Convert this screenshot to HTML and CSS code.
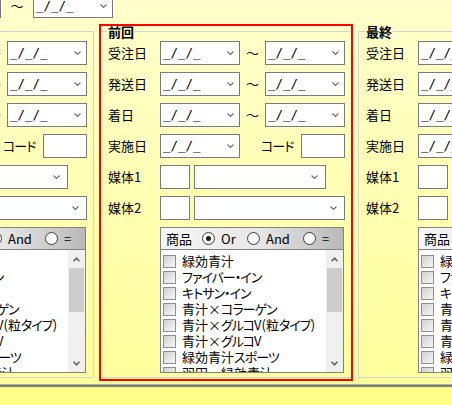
FILE: index.html
```html
<!DOCTYPE html>
<html lang="ja">
<head>
<meta charset="utf-8">
<title>検索条件</title>
<link rel="stylesheet" href="styles.css">
</head>
<body>
<div class="toprow">
  <div class="combo dt"><span class="val">_/_/_</span><svg class="dd" width="7" height="4" viewBox="0 0 7 4"><path d="M0.5 0.5L3.5 3.5L6.5 0.5"/></svg></div>
  <span class="tl top-tl">～</span>
  <div class="combo dt"><span class="val">_/_/_</span><svg class="dd" width="7" height="4" viewBox="0 0 7 4"><path d="M0.5 0.5L3.5 3.5L6.5 0.5"/></svg></div>
</div>

<div class="grps">
  <fieldset class="grp">
    <legend>今回</legend>
    <div class="row"><span class="lbl">受注日</span><div class="combo dt"><span class="val">_/_/_</span><svg class="dd" width="7" height="4" viewBox="0 0 7 4"><path d="M0.5 0.5L3.5 3.5L6.5 0.5"/></svg></div><span class="tl">～</span><div class="combo dt"><span class="val">_/_/_</span><svg class="dd" width="7" height="4" viewBox="0 0 7 4"><path d="M0.5 0.5L3.5 3.5L6.5 0.5"/></svg></div></div>
    <div class="row"><span class="lbl">発送日</span><div class="combo dt"><span class="val">_/_/_</span><svg class="dd" width="7" height="4" viewBox="0 0 7 4"><path d="M0.5 0.5L3.5 3.5L6.5 0.5"/></svg></div><span class="tl">～</span><div class="combo dt"><span class="val">_/_/_</span><svg class="dd" width="7" height="4" viewBox="0 0 7 4"><path d="M0.5 0.5L3.5 3.5L6.5 0.5"/></svg></div></div>
    <div class="row"><span class="lbl">着日</span><div class="combo dt"><span class="val">_/_/_</span><svg class="dd" width="7" height="4" viewBox="0 0 7 4"><path d="M0.5 0.5L3.5 3.5L6.5 0.5"/></svg></div><span class="tl">～</span><div class="combo dt"><span class="val">_/_/_</span><svg class="dd" width="7" height="4" viewBox="0 0 7 4"><path d="M0.5 0.5L3.5 3.5L6.5 0.5"/></svg></div></div>
    <div class="row"><span class="lbl">実施日</span><div class="combo dt"><span class="val">_/_/_</span><svg class="dd" width="7" height="4" viewBox="0 0 7 4"><path d="M0.5 0.5L3.5 3.5L6.5 0.5"/></svg></div><span class="code k">コード</span><div class="box codein"></div></div>
    <div class="row"><span class="lbl">媒体1</span><div class="box sm"></div><div class="combo m1"><span class="val"></span><svg class="dd" width="7" height="4" viewBox="0 0 7 4"><path d="M0.5 0.5L3.5 3.5L6.5 0.5"/></svg></div></div>
    <div class="row"><span class="lbl">媒体2</span><div class="box sm"></div><div class="combo m2"><span class="val"></span><svg class="dd" width="7" height="4" viewBox="0 0 7 4"><path d="M0.5 0.5L3.5 3.5L6.5 0.5"/></svg></div></div>
    <div class="pnl">
      <div class="hdr">
        <span class="htitle">商品</span>
        <span class="opt o1"><span class="radio on"></span>Or</span>
        <span class="opt o2"><span class="radio"></span>And</span>
        <span class="opt"><span class="radio"></span>=</span>
      </div>
      <div class="lst">
        <ul class="items">
          <li><span class="cb"></span>緑効青汁</li>
          <li><span class="cb"></span><span class="k">ファイバー・イン</span></li>
          <li><span class="cb"></span><span class="k">キトサン・イン</span></li>
          <li><span class="cb"></span>青汁×<span class="k">コラーゲン</span></li>
          <li><span class="cb"></span>青汁×<span class="k">グルコ</span>V(粒<span class="k">タイプ</span>)</li>
          <li><span class="cb"></span>青汁×<span class="k">グルコ</span>V</li>
          <li><span class="cb"></span>緑効青汁<span class="k">スポーツ</span></li>
          <li><span class="cb"></span>羽田　緑効青汁</li>
        </ul>
        <div class="sb">
          <div class="sb-btn"><svg width="7" height="5" viewBox="0 0 7 5"><path d="M0.5 4.3L3.5 1.2L6.5 4.3"/></svg></div>
          <div class="sb-thumb"></div>
          <div class="sb-space"></div>
          <div class="sb-btn"><svg width="7" height="5" viewBox="0 0 7 5"><path d="M0.5 0.7L3.5 3.8L6.5 0.7"/></svg></div>
        </div>
      </div>
    </div>
  </fieldset>

  <div class="hl">
  <fieldset class="grp">
    <legend>前回</legend>
    <div class="row"><span class="lbl">受注日</span><div class="combo dt"><span class="val">_/_/_</span><svg class="dd" width="7" height="4" viewBox="0 0 7 4"><path d="M0.5 0.5L3.5 3.5L6.5 0.5"/></svg></div><span class="tl">～</span><div class="combo dt"><span class="val">_/_/_</span><svg class="dd" width="7" height="4" viewBox="0 0 7 4"><path d="M0.5 0.5L3.5 3.5L6.5 0.5"/></svg></div></div>
    <div class="row"><span class="lbl">発送日</span><div class="combo dt"><span class="val">_/_/_</span><svg class="dd" width="7" height="4" viewBox="0 0 7 4"><path d="M0.5 0.5L3.5 3.5L6.5 0.5"/></svg></div><span class="tl">～</span><div class="combo dt"><span class="val">_/_/_</span><svg class="dd" width="7" height="4" viewBox="0 0 7 4"><path d="M0.5 0.5L3.5 3.5L6.5 0.5"/></svg></div></div>
    <div class="row"><span class="lbl">着日</span><div class="combo dt"><span class="val">_/_/_</span><svg class="dd" width="7" height="4" viewBox="0 0 7 4"><path d="M0.5 0.5L3.5 3.5L6.5 0.5"/></svg></div><span class="tl">～</span><div class="combo dt"><span class="val">_/_/_</span><svg class="dd" width="7" height="4" viewBox="0 0 7 4"><path d="M0.5 0.5L3.5 3.5L6.5 0.5"/></svg></div></div>
    <div class="row"><span class="lbl">実施日</span><div class="combo dt"><span class="val">_/_/_</span><svg class="dd" width="7" height="4" viewBox="0 0 7 4"><path d="M0.5 0.5L3.5 3.5L6.5 0.5"/></svg></div><span class="code k">コード</span><div class="box codein"></div></div>
    <div class="row"><span class="lbl">媒体1</span><div class="box sm"></div><div class="combo m1"><span class="val"></span><svg class="dd" width="7" height="4" viewBox="0 0 7 4"><path d="M0.5 0.5L3.5 3.5L6.5 0.5"/></svg></div></div>
    <div class="row"><span class="lbl">媒体2</span><div class="box sm"></div><div class="combo m2"><span class="val"></span><svg class="dd" width="7" height="4" viewBox="0 0 7 4"><path d="M0.5 0.5L3.5 3.5L6.5 0.5"/></svg></div></div>
    <div class="pnl">
      <div class="hdr">
        <span class="htitle">商品</span>
        <span class="opt o1"><span class="radio on"></span>Or</span>
        <span class="opt o2"><span class="radio"></span>And</span>
        <span class="opt"><span class="radio"></span>=</span>
      </div>
      <div class="lst">
        <ul class="items">
          <li><span class="cb"></span>緑効青汁</li>
          <li><span class="cb"></span><span class="k">ファイバー・イン</span></li>
          <li><span class="cb"></span><span class="k">キトサン・イン</span></li>
          <li><span class="cb"></span>青汁×<span class="k">コラーゲン</span></li>
          <li><span class="cb"></span>青汁×<span class="k">グルコ</span>V(粒<span class="k">タイプ</span>)</li>
          <li><span class="cb"></span>青汁×<span class="k">グルコ</span>V</li>
          <li><span class="cb"></span>緑効青汁<span class="k">スポーツ</span></li>
          <li><span class="cb"></span>羽田　緑効青汁</li>
        </ul>
        <div class="sb">
          <div class="sb-btn"><svg width="7" height="5" viewBox="0 0 7 5"><path d="M0.5 4.3L3.5 1.2L6.5 4.3"/></svg></div>
          <div class="sb-thumb"></div>
          <div class="sb-space"></div>
          <div class="sb-btn"><svg width="7" height="5" viewBox="0 0 7 5"><path d="M0.5 0.7L3.5 3.8L6.5 0.7"/></svg></div>
        </div>
      </div>
    </div>
  </fieldset>
  </div>

  <fieldset class="grp">
    <legend>最終</legend>
    <div class="row"><span class="lbl">受注日</span><div class="combo dt"><span class="val">_/_/_</span><svg class="dd" width="7" height="4" viewBox="0 0 7 4"><path d="M0.5 0.5L3.5 3.5L6.5 0.5"/></svg></div><span class="tl">～</span><div class="combo dt"><span class="val">_/_/_</span><svg class="dd" width="7" height="4" viewBox="0 0 7 4"><path d="M0.5 0.5L3.5 3.5L6.5 0.5"/></svg></div></div>
    <div class="row"><span class="lbl">発送日</span><div class="combo dt"><span class="val">_/_/_</span><svg class="dd" width="7" height="4" viewBox="0 0 7 4"><path d="M0.5 0.5L3.5 3.5L6.5 0.5"/></svg></div><span class="tl">～</span><div class="combo dt"><span class="val">_/_/_</span><svg class="dd" width="7" height="4" viewBox="0 0 7 4"><path d="M0.5 0.5L3.5 3.5L6.5 0.5"/></svg></div></div>
    <div class="row"><span class="lbl">着日</span><div class="combo dt"><span class="val">_/_/_</span><svg class="dd" width="7" height="4" viewBox="0 0 7 4"><path d="M0.5 0.5L3.5 3.5L6.5 0.5"/></svg></div><span class="tl">～</span><div class="combo dt"><span class="val">_/_/_</span><svg class="dd" width="7" height="4" viewBox="0 0 7 4"><path d="M0.5 0.5L3.5 3.5L6.5 0.5"/></svg></div></div>
    <div class="row"><span class="lbl">実施日</span><div class="combo dt"><span class="val">_/_/_</span><svg class="dd" width="7" height="4" viewBox="0 0 7 4"><path d="M0.5 0.5L3.5 3.5L6.5 0.5"/></svg></div><span class="code k">コード</span><div class="box codein"></div></div>
    <div class="row"><span class="lbl">媒体1</span><div class="box sm"></div><div class="combo m1"><span class="val"></span><svg class="dd" width="7" height="4" viewBox="0 0 7 4"><path d="M0.5 0.5L3.5 3.5L6.5 0.5"/></svg></div></div>
    <div class="row"><span class="lbl">媒体2</span><div class="box sm"></div><div class="combo m2"><span class="val"></span><svg class="dd" width="7" height="4" viewBox="0 0 7 4"><path d="M0.5 0.5L3.5 3.5L6.5 0.5"/></svg></div></div>
    <div class="pnl">
      <div class="hdr">
        <span class="htitle">商品</span>
        <span class="opt o1"><span class="radio on"></span>Or</span>
        <span class="opt o2"><span class="radio"></span>And</span>
        <span class="opt"><span class="radio"></span>=</span>
      </div>
      <div class="lst">
        <ul class="items">
          <li><span class="cb"></span>緑効青汁</li>
          <li><span class="cb"></span><span class="k">ファイバー・イン</span></li>
          <li><span class="cb"></span><span class="k">キトサン・イン</span></li>
          <li><span class="cb"></span>青汁×<span class="k">コラーゲン</span></li>
          <li><span class="cb"></span>青汁×<span class="k">グルコ</span>V(粒<span class="k">タイプ</span>)</li>
          <li><span class="cb"></span>青汁×<span class="k">グルコ</span>V</li>
          <li><span class="cb"></span>緑効青汁<span class="k">スポーツ</span></li>
          <li><span class="cb"></span>羽田　緑効青汁</li>
        </ul>
        <div class="sb">
          <div class="sb-btn"><svg width="7" height="5" viewBox="0 0 7 5"><path d="M0.5 4.3L3.5 1.2L6.5 4.3"/></svg></div>
          <div class="sb-thumb"></div>
          <div class="sb-space"></div>
          <div class="sb-btn"><svg width="7" height="5" viewBox="0 0 7 5"><path d="M0.5 0.7L3.5 3.8L6.5 0.7"/></svg></div>
        </div>
      </div>
    </div>
  </fieldset>
</div>

<div class="footer"></div>
</body>
</html>
```

FILE: styles.css
```css
html, body {
  margin: 0;
  padding: 0;
  width: 452px;
  height: 405px;
  overflow: hidden;
}
body {
  background: linear-gradient(#ffffcc 0px, #ffff9c 384px);
  font-family: "Noto Sans CJK JP", "Noto Sans", sans-serif;
  font-size: 13px;
  color: #000;
  font-feature-settings: "palt";
}

/* katakana runs: tighter, like the proportional UI font */
.k {
  letter-spacing: -1px;
}

/* top partial row */
.toprow {
  display: flex;
  align-items: center;
  height: 24px;
  margin-top: -6px;
  margin-left: -79px;
}
.tl {
  width: 25px;
  flex: none;
  text-align: center;
  line-height: 16px;
  font-feature-settings: normal;
}
.top-tl {
  width: 32px;
}

/* controls */
.combo, .box {
  height: 24px;
  box-sizing: border-box;
  border: 1px solid #7a7a7a;
  background: #fff;
  flex: none;
}
.combo {
  display: flex;
  align-items: center;
  padding-left: 2px;
}
.combo .val {
  flex: 1;
  font-family: "DejaVu Sans Mono", "Liberation Mono", monospace;
  font-size: 12.5px;
  line-height: 14px;
  white-space: pre;
  font-feature-settings: normal;
}
.dd {
  flex: none;
  margin-right: 5px;
}
.dd path {
  fill: none;
  stroke: #6e6e6e;
  stroke-width: 1.1;
}
.dt { width: 80px; }
.m1 { width: 132px; margin-left: 4px; }
.m2 { width: 151px; margin-left: 4px; }
.m1 .dd, .m2 .dd { margin-right: 7px; }
.sm { width: 30px; }
.codein { width: 44px; margin-left: auto; }
.code {
  margin-left: 21px;
  line-height: 16px;
}

/* group boxes */
.grps {
  display: flex;
  gap: 6px;
  margin-top: 7px;
  margin-left: -158px;
}
.grp {
  margin: 0;
  padding: 3px 6px 4px 7px;
  border: 1px solid #d4d4d4;
  width: 252px;
  box-sizing: border-box;
  min-inline-size: 0;
  flex: none;
}
.grp legend {
  padding: 0 1px;
  margin-left: -1px;
  font-weight: bold;
  font-size: 13px;
  line-height: 13px;
}
.hl {
  position: relative;
  flex: none;
}
.hl::after {
  content: "";
  position: absolute;
  left: -1px;
  right: -1px;
  top: -1px;
  bottom: -3px;
  border: 2px solid #ff0000;
  pointer-events: none;
}

.row {
  display: flex;
  align-items: center;
  height: 24px;
  margin-bottom: 7px;
}
.lbl {
  width: 52px;
  flex: none;
  line-height: 16px;
  white-space: nowrap;
}

/* product panel */
.pnl {
  margin-left: 52px;
  width: 184px;
  height: 146px;
  box-sizing: border-box;
  border: 1px solid #828282;
  display: flex;
  flex-direction: column;
  background: #fff;
}
.hdr {
  height: 22px;
  flex: none;
  box-sizing: border-box;
  border-bottom: 1px solid #828282;
  display: flex;
  align-items: center;
  padding-left: 5px;
  background: linear-gradient(to right, #f7f7f7 0%, #e6e6e6 55%, #b9b9b9 100%);
  line-height: 16px;
  white-space: nowrap;
}
.htitle { width: 36px; flex: none; }
.opt {
  display: flex;
  align-items: center;
  gap: 6px;
  flex: none;
  font-feature-settings: normal;
}
.o1 { width: 45px; }
.o2 { width: 56px; }
.radio {
  width: 13px;
  height: 13px;
  box-sizing: border-box;
  border: 1px solid #3c3c3c;
  border-radius: 50%;
  background: #fff;
  display: flex;
  align-items: center;
  justify-content: center;
  flex: none;
}
.radio.on::after {
  content: "";
  width: 5px;
  height: 5px;
  border-radius: 50%;
  background: #1e1e1e;
}

.lst {
  flex: 1;
  display: flex;
  overflow: hidden;
}
.items {
  list-style: none;
  margin: 0;
  padding: 3px 0 0 2px;
  flex: 1;
  overflow: hidden;
}
.items li {
  height: 16px;
  display: flex;
  align-items: center;
  line-height: 16px;
  white-space: nowrap;
}
.cb {
  width: 13px;
  height: 13px;
  box-sizing: border-box;
  border: 1px solid #8f8f8f;
  background: linear-gradient(135deg, #d2d2d2, #f6f6f6);
  margin-right: 6px;
  flex: none;
}

.sb {
  width: 17px;
  flex: none;
  background: #f0f0f0;
  display: flex;
  flex-direction: column;
}
.sb-btn {
  height: 18px;
  flex: none;
  display: flex;
  align-items: center;
  justify-content: center;
}
.sb-btn path {
  fill: none;
  stroke: #606060;
  stroke-width: 1.6;
}
.sb-thumb {
  height: 44px;
  flex: none;
  margin: 0 1px;
  background: #cdcdcd;
}
.sb-space { flex: 1; }

/* bottom strip */
.footer {
  margin-top: 6px;
  height: 21px;
  border-top: 1px solid #acacac;
  box-shadow: inset 0 2px 0 #7c7c7c;
  background: #ffff88;
}
```
